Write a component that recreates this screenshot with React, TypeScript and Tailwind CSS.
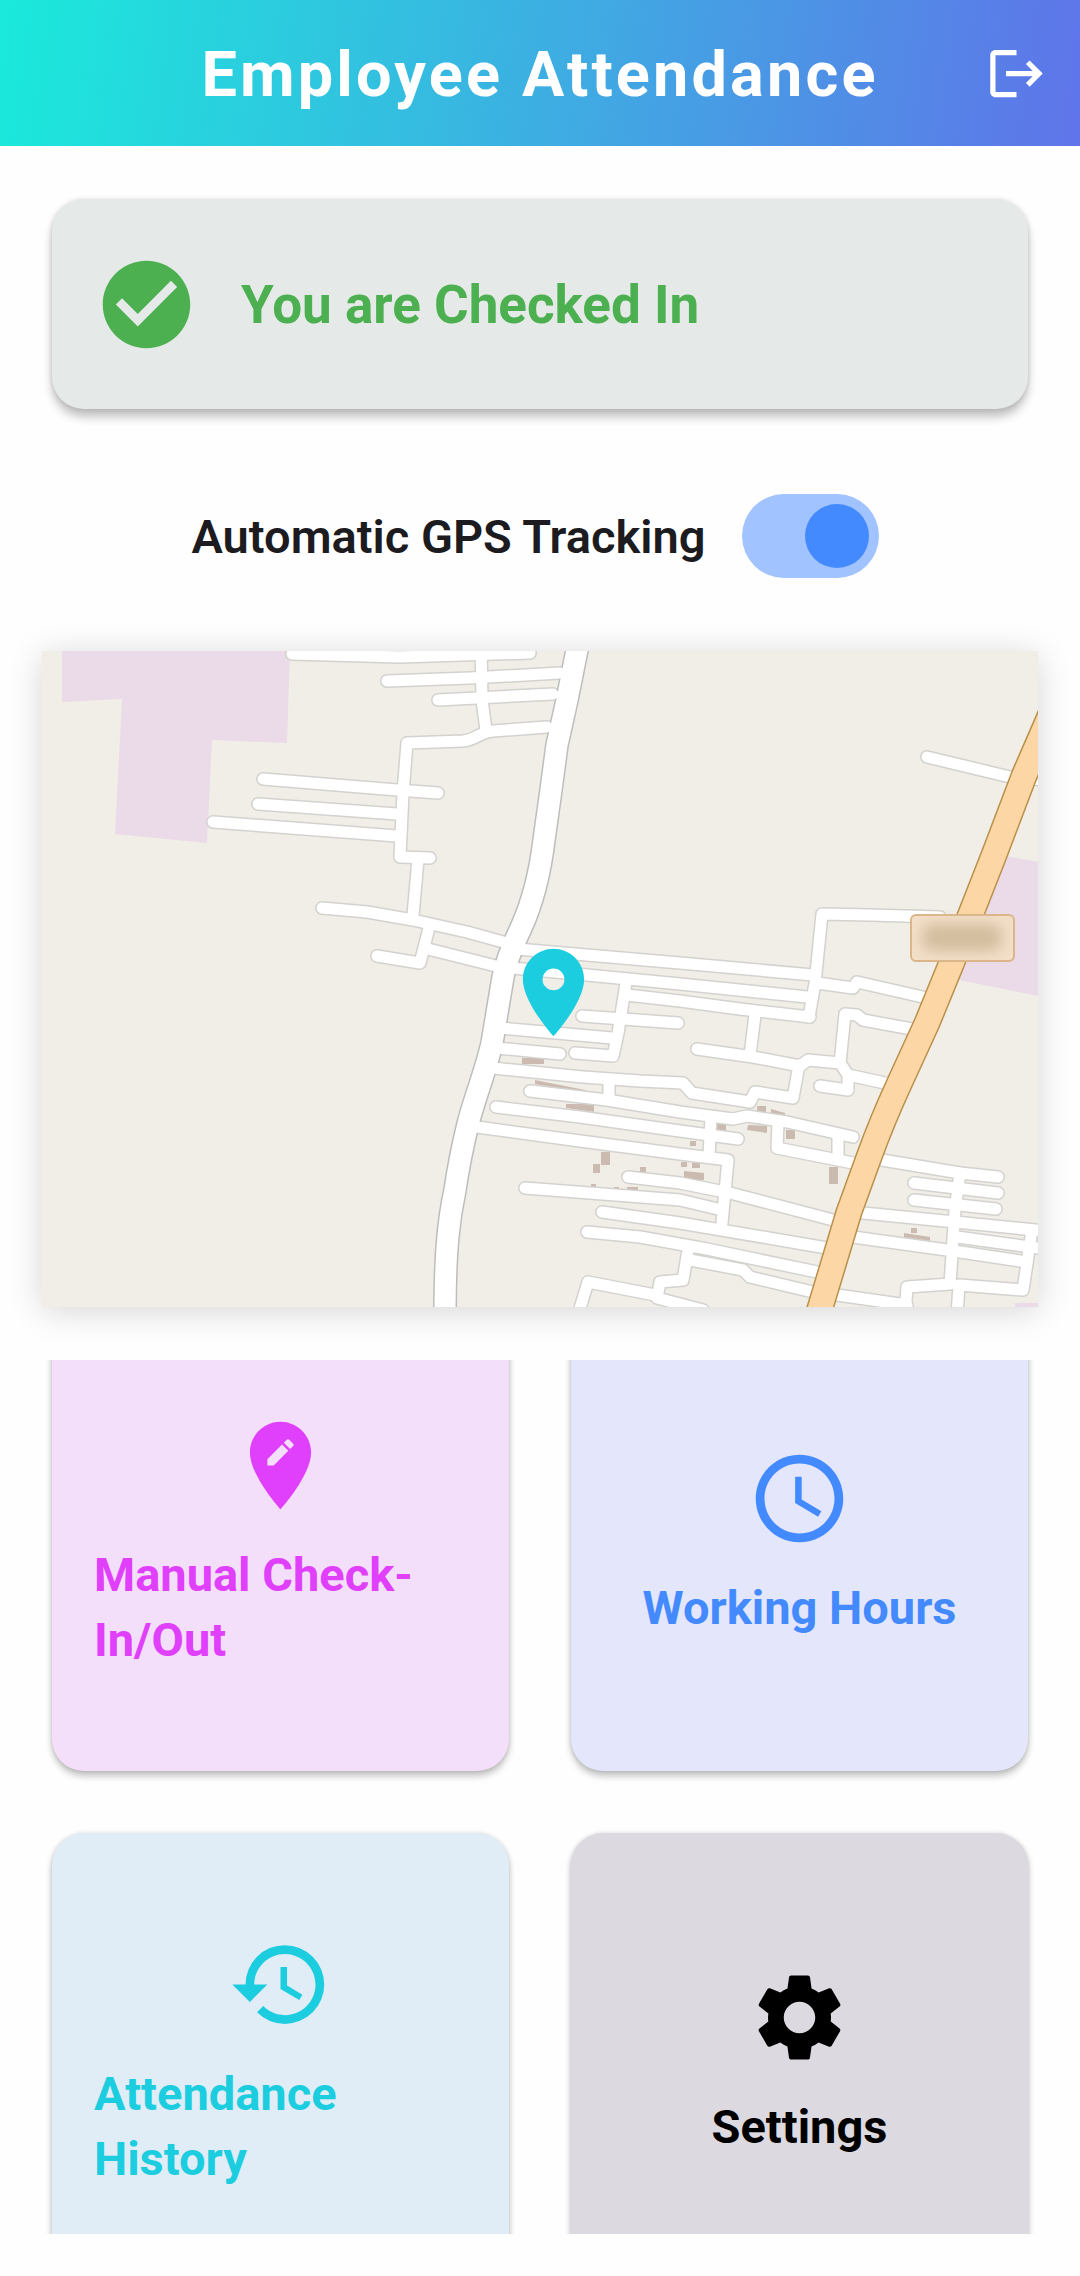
import { useLayoutEffect, useRef, useState } from "react";
import type { IconType } from "react-icons";
import {
  MdAccessTime,
  MdCheckCircle,
  MdEditLocation,
  MdHistory,
  MdLogout,
  MdSettings,
} from "react-icons/md";

type Action = {
  label: string;
  icon: IconType;
  card: string;
};

const actions: Action[] = [
  { label: "Manual Check-In/Out", icon: MdEditLocation, card: "bg-[#f4dffa] text-[#e040fb]" },
  { label: "Working Hours", icon: MdAccessTime, card: "bg-[#e4e7fb] text-[#448aff]" },
  { label: "Attendance History", icon: MdHistory, card: "bg-[#e0edf7] text-[#1ccde0]" },
  { label: "Settings", icon: MdSettings, card: "bg-[#ddd9e0] text-black" },
];

const mainRoad =
  "M579 640L567 700L557 745L551 790L544 840C541 865 536 895 521 928C512 947 506 962 503 977L492 1043C486 1070 474 1100 468 1124C462 1148 458 1170 455 1190C449 1218 445 1250 445 1315";

const highway =
  "M1057 700L1024 776L994 855L952 962L927 1023L900 1082C888 1108 878 1132 869 1157L849 1212L818 1315";

const streets = [
  "M292 654L400 657L530 653",
  "M424 645V655",
  "M387 681L470 678L560 673",
  "M438 700L553 694",
  "M481 640L482 700L486 730",
  "M547 727L493 731C480 732 475 740 463 741L407 743L403 793L400 857L430 858",
  "M263 779L397 790L438 793",
  "M258 804L397 814",
  "M213 822L397 836",
  "M418 860L413 915",
  "M322 908L367 912L413 920L467 932L507 943",
  "M429 928L420 963L377 956",
  "M428 949L500 967",
  "M517 949L680 963L813 975",
  "M513 968L587 975L680 984L807 997",
  "M627 995L680 1001L740 1009L810 1017",
  "M940 917L870 915L822 914L815 983L809 1017",
  "M626 983L618 1033L613 1056L575 1053",
  "M582 1016L678 1023",
  "M500 1028L612 1038",
  "M497 1048L560 1054",
  "M493 1068L583 1077L640 1081L683 1083L692 1093L750 1102L755 1092L793 1098L799 1065",
  "M697 1049L753 1057L800 1066L808 1060L840 1063L848 1075L885 1083",
  "M848 1075L848 1090L820 1086",
  "M755 1015L750 1055",
  "M840 1063L845 1014L857 1015L863 1020L912 1029",
  "M817 983L853 988L857 982L927 998",
  "M530 1091L607 1100L680 1112L733 1119L747 1116L787 1122L853 1137",
  "M609 1080V1100",
  "M496 1107L580 1117L680 1131L738 1139",
  "M477 1127L580 1141L680 1154L728 1160L722 1223",
  "M711 1118L709 1155",
  "M778 1123L777 1148L853 1163",
  "M838 1135V1158",
  "M882 1160L960 1173L998 1177",
  "M628 1177L680 1183L730 1193L833 1220",
  "M525 1188L680 1200L722 1210",
  "M602 1212L680 1223L827 1248",
  "M587 1232L640 1237L707 1249L817 1272",
  "M688 1250L683 1280L660 1282L657 1298L703 1310",
  "M578 1315L588 1282L655 1295",
  "M690 1260L743 1270L750 1277L813 1292",
  "M863 1213L955 1222L1045 1231",
  "M853 1237L947 1250L1027 1262",
  "M914 1183L998 1193",
  "M914 1200L996 1209",
  "M957 1237L1045 1249",
  "M960 1173L955 1210L950 1284L907 1287L905 1315",
  "M957 1315L959 1285L1023 1290L1032 1230",
  "M837 1295L907 1305",
  "M927 757L1010 777L1045 780",
];

const buildings = [
  "M522 1058h22v6h-22z",
  "M535 1080l50 10v3l-50-9z",
  "M566 1104h28v8l-28-4z",
  "M601 1152h9v13h-9z",
  "M593 1164h7v9h-7z",
  "M640 1167h6v6h-6z",
  "M591 1184h5v4h-5z",
  "M614 1187h5v4h-5z",
  "M627 1187h11v5h-11z",
  "M757 1106h9v8h-9z",
  "M771 1109l14 4v5l-14-4z",
  "M717 1124h9v7h-9z",
  "M748 1125l19 1v7l-20-3z",
  "M786 1130h9v9h-9z",
  "M690 1141h6v5h-6z",
  "M681 1162h6v5h-6z",
  "M692 1163h8v5h-8z",
  "M684 1171l20 2v7h-20z",
  "M829 1167h9v17h-9z",
  "M911 1228h6v5h-6z",
  "M904 1233l26 4v5l-26-3z",
];

function StreetMap() {
  return (
    <svg
      viewBox="42 651 996 656"
      className="block h-auto w-full"
      role="img"
      aria-label="Map of your current location"
      fill="none"
      strokeLinecap="round"
      strokeLinejoin="round"
    >
      <defs>
        <filter id="plate-blur" x="-30%" y="-80%" width="160%" height="260%">
          <feGaussianBlur stdDeviation="7" />
        </filter>
      </defs>
      <rect x="42" y="651" width="996" height="656" fill="#f1eee7" />
      <g fill="#ebdbe8">
        <path d="M62 651V702L122 699L115 834L207 843L212 740L287 743L290 651z" />
        <path d="M1007 856L1038 862V996L950 978z" />
        <path d="M1015 1303H1038V1307H1015z" />
      </g>
      <g fill="#cbbab0">
        {buildings.map((d) => (
          <path key={d} d={d} />
        ))}
      </g>
      <g stroke="#d3d2cf" strokeWidth="14">
        {streets.map((d) => (
          <path key={d} d={d} />
        ))}
      </g>
      <path d={mainRoad} stroke="#bdbdbd" strokeWidth="24" />
      <g stroke="#ffffff" strokeWidth="11">
        {streets.map((d) => (
          <path key={d} d={d} />
        ))}
      </g>
      <path d={mainRoad} stroke="#ffffff" strokeWidth="21" />
      <path d={highway} stroke="#b98f49" strokeWidth="27" />
      <path d={highway} stroke="#fcd6a4" strokeWidth="24" />
      <rect x="911" y="915" width="103" height="46" rx="5" fill="#f3dfc8" stroke="#dcb68a" strokeWidth="2" />
      <g fill="#d3bd9f" filter="url(#plate-blur)">
        <rect x="922" y="924" width="80" height="27" rx="10" />
      </g>
      <path
        transform="translate(501 940) scale(4.375)"
        fill="#1ccde0"
        d="M12 2C8.13 2 5 5.13 5 9c0 5.25 7 13 7 13s7-7.75 7-13c0-3.87-3.13-7-7-7zm0 9.5a2.5 2.5 0 0 1 0-5 2.5 2.5 0 0 1 0 5z"
      />
    </svg>
  );
}

function GpsSwitch() {
  const [on, setOn] = useState(true);
  return (
    <div className="mt-[85px] flex items-center justify-center gap-9">
      <label htmlFor="gps" className="text-[47px] leading-[65px] font-semibold text-[#1c1b1f]">
        Automatic GPS Tracking
      </label>
      <input
        id="gps"
        type="checkbox"
        role="switch"
        checked={on}
        onChange={(e) => setOn(e.target.checked)}
        className="mr-2.5 flex h-[84px] w-[137px] shrink-0 appearance-none items-center justify-start rounded-full bg-[#d5d5d8] px-2.5 before:size-[64px] before:rounded-full before:bg-white checked:justify-end checked:bg-[#a1c3ff] checked:before:bg-[#448aff]"
      />
    </div>
  );
}

function ActionCard({ label, icon: Icon, card }: Action) {
  return (
    <button
      type="button"
      className={
        "flex aspect-square flex-col items-center justify-center gap-6 rounded-[32px] px-[42px] text-left text-[47px] leading-[65px] font-bold shadow-[0_5px_7px_rgba(0,0,0,0.24),0_0_4px_rgba(0,0,0,0.12)] " +
        card
      }
    >
      <Icon size={105} className="shrink-0" aria-hidden />
      <span>{label}</span>
    </button>
  );
}

export default function App() {
  const list = useRef<HTMLElement>(null);

  // The list opens part of the way down, with its first row under the upper edge.
  useLayoutEffect(() => {
    if (list.current) list.current.scrollTop = 46;
  }, []);

  return (
    <div className="flex h-screen flex-col bg-[#fefefe] pb-[42px] font-['Roboto',sans-serif]">
      <header className="grid h-[146px] shrink-0 grid-cols-[63px_1fr_63px] items-center bg-[linear-gradient(98deg,#1aeadb,#5f74e9)] px-8">
        <h1 className="col-start-2 pt-1 text-center text-[63px] leading-[74px] font-bold tracking-wider text-white">
          Employee Attendance
        </h1>
        <button type="button" aria-label="Log out" className="text-white">
          <MdLogout size={63} aria-hidden />
        </button>
      </header>

      <section className="mx-[52px] mt-[53px] flex h-[210px] shrink-0 items-center gap-[42px] rounded-[32px] bg-[#e5eae8] px-[42px] text-[#4caf50] shadow-[0_8px_10px_rgba(0,0,0,0.24),0_0_5px_rgba(0,0,0,0.12)]">
        <MdCheckCircle size={105} className="shrink-0" aria-hidden />
        <p className="pt-0.5 text-[53px] leading-[74px] font-bold">You are Checked In</p>
      </section>

      <GpsSwitch />

      <section className="mx-[42px] mt-[73px] shrink-0 shadow-[0_4px_32px_rgba(0,0,0,0.16)]">
        <StreetMap />
      </section>

      <main
        ref={list}
        className="mt-[53px] grid min-h-[460px] flex-1 grid-cols-2 content-start gap-[62px] overflow-y-auto px-[52px] [scrollbar-width:none]"
      >
        {actions.map((action) => (
          <ActionCard key={action.label} {...action} />
        ))}
        <div className="col-span-2 h-10" />
      </main>
    </div>
  );
}
